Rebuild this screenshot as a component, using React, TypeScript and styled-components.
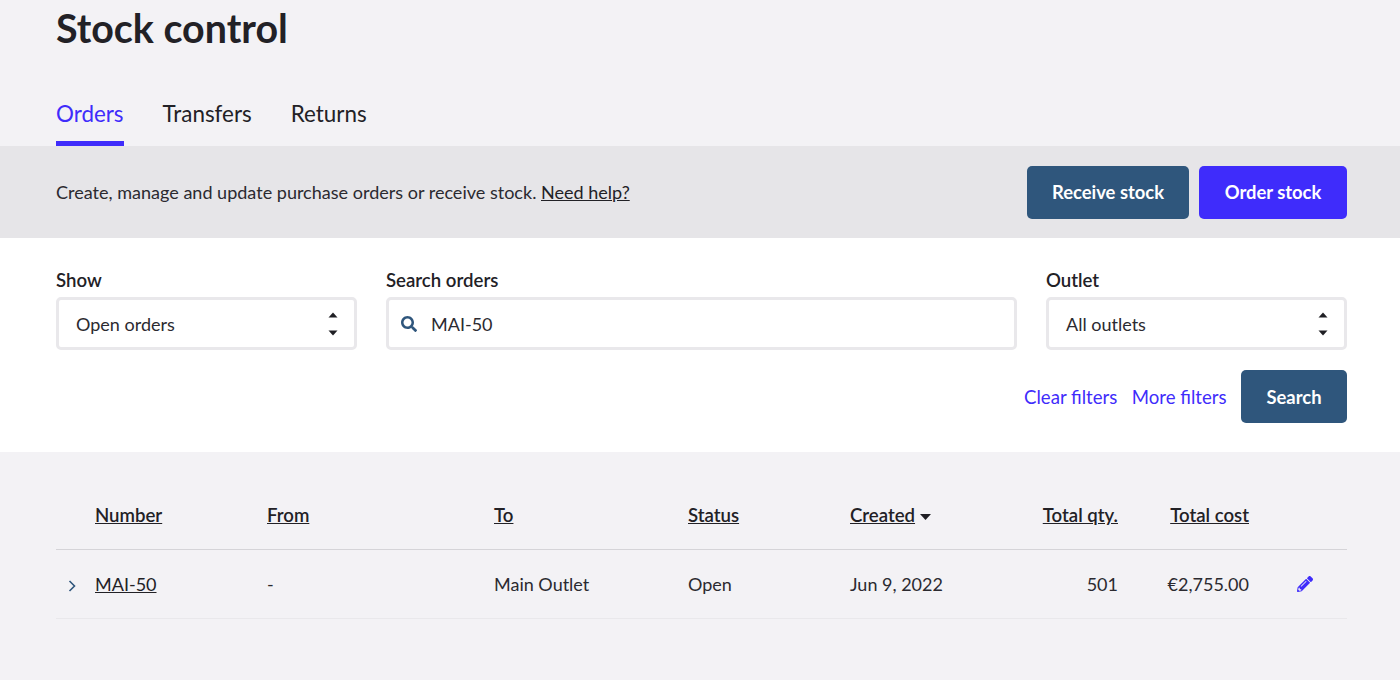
import React from "react";
import styled, { createGlobalStyle } from "styled-components";
import { FaSearch, FaPencilAlt } from "react-icons/fa";

const Global = createGlobalStyle`
  html, body { margin: 0; padding: 0; background: #f3f2f5; }
  body { font-family: Lato, "Liberation Sans", sans-serif; color: #222126; overflow: hidden; }
`;

const Page = styled.div`
  width: 1400px;
  height: 680px;
  background: #f3f2f5;
  overflow: hidden;
`;

const Header = styled.header`
  padding: 4px 53px 0 56px;
`;

const Title = styled.h1`
  margin: 0;
  font-size: 39.4px;
  line-height: 48px;
  font-weight: 700;
  color: #222126;
`;

const Tabs = styled.nav`
  display: flex;
  gap: 39px;
  margin-top: 35px;
`;

const Tab = styled.a<{ $active?: boolean }>`
  display: block;
  height: 59px;
  box-sizing: border-box;
  padding-top: 12px;
  font-size: 22.4px;
  line-height: 30px;
  color: ${(p) => (p.$active ? "#3f2cfb" : "#222126")};
  border-bottom: 5px solid ${(p) => (p.$active ? "#3f2cfb" : "transparent")};
`;

const Banner = styled.section`
  height: 92px;
  background: #e6e5e8;
  display: flex;
  align-items: center;
  justify-content: space-between;
  padding: 0 53px 0 56px;
`;

const BannerText = styled.p`
  margin: 0;
  font-size: 18.05px;
  color: #2b2a30;
`;

const Help = styled.a`
  color: #222126;
  text-decoration: underline;
`;

const Actions = styled.div`
  display: flex;
  gap: 10px;
`;

const Button = styled.button<{ $primary?: boolean; $w: number }>`
  width: ${(p) => p.$w}px;
  height: 53px;
  border: 0;
  border-radius: 5px;
  background: ${(p) => (p.$primary ? "#3f2cfb" : "#2f567c")};
  color: #fff;
  font-family: inherit;
  font-size: 18.4px;
  font-weight: 700;
  padding: 0;
`;

const Filters = styled.section`
  height: 214px;
  box-sizing: border-box;
  background: #fff;
  padding: 30px 53px 0 56px;
`;

const FieldRow = styled.div`
  display: grid;
  grid-template-columns: 301px 631px 301px;
  column-gap: 29px;
`;

const Field = styled.div`
  display: flex;
  flex-direction: column;
`;

const Label = styled.label`
  font-size: 18.6px;
  line-height: 24px;
  font-weight: 600;
  margin-bottom: 5px;
  color: #222126;
`;

const Box = styled.div`
  height: 53px;
  box-sizing: border-box;
  border: 3px solid #e9e8eb;
  border-radius: 5px;
  background: #fff;
  display: flex;
  align-items: center;
  font-size: 18px;
  color: #2b2a30;
`;

const SelectBox = styled(Box)`
  justify-content: space-between;
  padding: 0 16px 0 17px;
`;

const SearchBox = styled(Box)`
  padding-left: 12px;
  gap: 14px;
  svg { color: #2f567c; }
`;

const FilterActions = styled.div`
  display: flex;
  justify-content: flex-end;
  align-items: center;
  margin-top: 20px;
`;

const LinkText = styled.a`
  font-size: 18.6px;
  color: #3f2cfb;
  margin-right: 14.5px;
`;

const Table = styled.div`
  margin: 30px 53px 0 56px;
`;

const Row = styled.div<{ $head?: boolean }>`
  display: grid;
  grid-template-columns: 39px 172px 227px 194px 162px 150px 118px 131px 98px;
  align-items: center;
  font-size: 18px;
  height: ${(p) => (p.$head ? "68px" : "69px")};
  padding-bottom: ${(p) => (p.$head ? "1px" : "0")};
  border-bottom: ${(p) => (p.$head ? "1.5px solid #d5d4d8" : "1.5px solid #e9e8eb")};
  box-sizing: border-box;
  color: #2b2a30;
`;

const Cell = styled.div<{ $right?: boolean }>`
  text-align: ${(p) => (p.$right ? "right" : "left")};
  white-space: nowrap;
`;

const HeadLink = styled.a`
  font-size: 18.6px;
  font-weight: 600;
  color: #222126;
  text-decoration: underline;
`;

const RowLink = styled.a`
  color: #222126;
  text-decoration: underline;
`;

const IconCell = styled.div`
  display: flex;
  align-items: center;
  padding-left: 48px;
  color: #3f2cfb;
`;

const ChevronCell = styled.div`
  display: flex;
  align-items: center;
  padding: 3px 0 0 12px;
`;

const Sort = styled.svg`
  margin-left: 5px;
  vertical-align: 2px;
`;

function Stepper() {
  return (
    <svg width="10" height="26" viewBox="0 0 10 26" fill="#1f1f24">
      <path d="M5 1.5 9.5 6.5H.5z" />
      <path d="M.5 19.5h9L5 24.5z" />
    </svg>
  );
}

export default function App() {
  return (
    <Page>
      <Global />
      <Header>
        <Title>Stock control</Title>
        <Tabs>
          <Tab $active>Orders</Tab>
          <Tab>Transfers</Tab>
          <Tab>Returns</Tab>
        </Tabs>
      </Header>
      <Banner>
        <BannerText>
          Create, manage and update purchase orders or receive stock. <Help>Need help?</Help>
        </BannerText>
        <Actions>
          <Button $w={162}>Receive stock</Button>
          <Button $primary $w={148}>Order stock</Button>
        </Actions>
      </Banner>
      <Filters>
        <FieldRow>
          <Field>
            <Label>Show</Label>
            <SelectBox>Open orders<Stepper /></SelectBox>
          </Field>
          <Field>
            <Label>Search orders</Label>
            <SearchBox><FaSearch size={16} />MAI-50</SearchBox>
          </Field>
          <Field>
            <Label>Outlet</Label>
            <SelectBox>All outlets<Stepper /></SelectBox>
          </Field>
        </FieldRow>
        <FilterActions>
          <LinkText>Clear filters</LinkText>
          <LinkText>More filters</LinkText>
          <Button $w={106}>Search</Button>
        </FilterActions>
      </Filters>
      <Table>
        <Row $head>
          <Cell />
          <Cell><HeadLink>Number</HeadLink></Cell>
          <Cell><HeadLink>From</HeadLink></Cell>
          <Cell><HeadLink>To</HeadLink></Cell>
          <Cell><HeadLink>Status</HeadLink></Cell>
          <Cell>
            <HeadLink>Created</HeadLink>
            <Sort width="11" height="6" viewBox="0 0 11 6" fill="#1f1f24"><path d="M0 0h11L5.5 6z" /></Sort>
          </Cell>
          <Cell $right><HeadLink>Total qty.</HeadLink></Cell>
          <Cell $right><HeadLink>Total cost</HeadLink></Cell>
          <Cell />
        </Row>
        <Row>
          <ChevronCell>
            <svg width="9" height="12" viewBox="0 0 9 12" fill="none" stroke="#2f567c" strokeWidth="1.6">
              <path d="M1.5 1 6.5 6 1.5 11" />
            </svg>
          </ChevronCell>
          <Cell><RowLink>MAI-50</RowLink></Cell>
          <Cell>-</Cell>
          <Cell>Main Outlet</Cell>
          <Cell>Open</Cell>
          <Cell>Jun 9, 2022</Cell>
          <Cell $right>501</Cell>
          <Cell $right>€2,755.00</Cell>
          <IconCell><FaPencilAlt size={16} /></IconCell>
        </Row>
      </Table>
    </Page>
  );
}
